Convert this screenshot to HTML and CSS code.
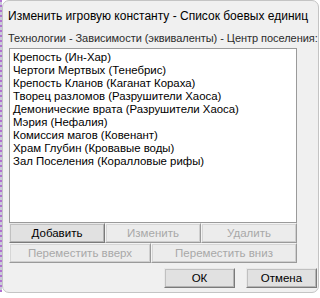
FILE: index.html
```html
<!DOCTYPE html>
<html lang="ru">
<head>
    <meta charset="UTF-8">
    <title>Изменить игровую константу</title>
    <link rel="stylesheet" href="styles.css">
</head>
<body>
    <div class="edge"></div>
    <div class="window">
        <div class="title">Изменить игровую константу - Список боевых единиц</div>
        <div class="label">Технологии - Зависимости (эквиваленты) - Центр поселения:</div>
        <div class="list">
            <div class="item">Крепость (Ин-Хар)</div>
            <div class="item">Чертоги Мертвых (Тенебрис)</div>
            <div class="item">Крепость Кланов (Каганат Кораха)</div>
            <div class="item">Творец разломов (Разрушители Хаоса)</div>
            <div class="item">Демонические врата (Разрушители Хаоса)</div>
            <div class="item">Мэрия (Нефалия)</div>
            <div class="item">Комиссия магов (Ковенант)</div>
            <div class="item">Храм Глубин (Кровавые воды)</div>
            <div class="item">Зал Поселения (Коралловые рифы)</div>
        </div>
        <div class="row">
            <button class="btn">Добавить</button>
            <button class="btn" disabled>Изменить</button>
            <button class="btn" disabled>Удалить</button>
        </div>
        <div class="row">
            <button class="btn wide" disabled>Переместить вверх</button>
            <button class="btn" disabled>Переместить вниз</button>
        </div>
        <div class="footer">
            <button class="btn ok">ОК</button>
            <button class="btn cancel">Отмена</button>
        </div>
    </div>
</body>
</html>
```

FILE: styles.css
```css
* {
    margin: 0;
    padding: 0;
    box-sizing: border-box;
}

body {
    width: 320px;
    height: 298px;
    overflow: hidden;
    display: flex;
    align-items: flex-start;
    background: #ffffff;
    font-family: 'Liberation Sans', sans-serif;
    color: #000;
}

.edge {
    width: 2px;
    height: 292px;
    background: repeating-linear-gradient(to bottom, #b070d0 0, #b070d0 2px, #c8c8d8 2px, #c8c8d8 5px);
}

.window {
    width: 317px;
    height: 293px;
    background: #f0f0f0;
    border: 1px solid #c4c4c4;
    border-radius: 7px;
    padding: 0 0 0 4px;
    overflow: hidden;
}

.title {
    font-size: 12px;
    line-height: 16px;
    padding-top: 7px;
    padding-left: 1px;
    white-space: nowrap;
}

.label {
    font-size: 11px;
    line-height: 14px;
    margin-top: 7px;
    padding-left: 1px;
    letter-spacing: -0.05px;
    color: #2b2b2b;
    white-space: nowrap;
}

.list {
    width: 288px;
    height: 175px;
    margin-top: 3px;
    margin-left: 2px;
    background: #fff;
    border: 1px solid #9a9a9a;
    padding: 2px 0 0 3px;
}

.item {
    font-size: 11.4px;
    line-height: 13px;
    white-space: nowrap;
}

.row {
    display: flex;
    margin-left: 2px;
    width: 288px;
}

.row:first-of-type {
    margin-top: 7px;
}

.btn {
    flex: 1;
    height: 20px;
    font-family: 'Liberation Sans', sans-serif;
    font-size: 11.5px;
    background: #e1e1e1;
    border: 1px solid #e8e8e8;
    border-right-color: #7a7a7a;
    border-bottom-color: #7a7a7a;
    box-shadow: inset -1px -1px 0 #b4b4b4, inset 1px 1px 0 #c0c0c0;
    color: #000;
}

.btn:disabled {
    background: #ececec;
    color: #a8a8a8;
    border-color: #f4f4f4;
    border-right-color: #9a9a9a;
    border-bottom-color: #9a9a9a;
    box-shadow: inset -1px -1px 0 #cfcfcf, inset 1px 1px 0 #d6d6d6;
}

.wide {
    flex: 0 0 142px;
}

.footer {
    display: flex;
    gap: 11px;
    margin-top: 5px;
    margin-left: 157px;
}

.footer .btn {
    flex: 0 0 71px;
    height: 20px;
}

.cancel {
    flex: 0 0 72px;
}
```
